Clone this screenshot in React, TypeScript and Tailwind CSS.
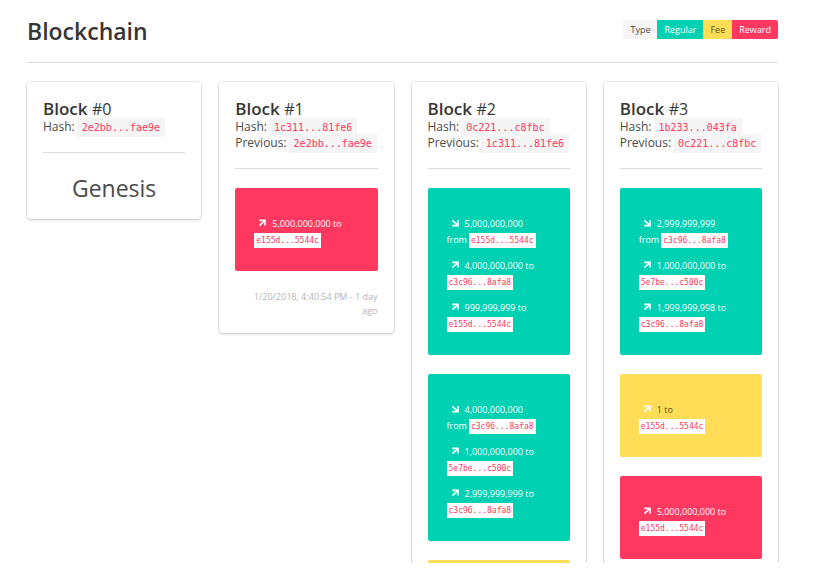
type Kind = "regular" | "fee" | "reward";
type Entry = { dir: "in" | "out"; amount: string; address: string };
type Tx = { kind: Kind; entries: Entry[] };
type Block = { index: number; hash: string; previous?: string; txs: Tx[]; time?: string };

const kindStyle: Record<Kind, string> = {
  regular: "bg-[#00d1b2] text-white",
  fee: "bg-[#ffdd57] text-black/70",
  reward: "bg-[#ff3860] text-white",
};

const blocks: Block[] = [
  { index: 0, hash: "2e2bb...fae9e", txs: [] },
  {
    index: 1,
    hash: "1c311...81fe6",
    previous: "2e2bb...fae9e",
    txs: [{ kind: "reward", entries: [{ dir: "out", amount: "5,000,000,000", address: "e155d...5544c" }] }],
    time: "1/20/2018, 4:40:54 PM - 1 day ago",
  },
  {
    index: 2,
    hash: "0c221...c8fbc",
    previous: "1c311...81fe6",
    txs: [
      {
        kind: "regular",
        entries: [
          { dir: "in", amount: "5,000,000,000", address: "e155d...5544c" },
          { dir: "out", amount: "4,000,000,000", address: "c3c96...8afa8" },
          { dir: "out", amount: "999,999,999", address: "e155d...5544c" },
        ],
      },
      {
        kind: "regular",
        entries: [
          { dir: "in", amount: "4,000,000,000", address: "c3c96...8afa8" },
          { dir: "out", amount: "1,000,000,000", address: "5e7be...c500c" },
          { dir: "out", amount: "2,999,999,999", address: "c3c96...8afa8" },
        ],
      },
      { kind: "fee", entries: [] },
    ],
  },
  {
    index: 3,
    hash: "1b233...043fa",
    previous: "0c221...c8fbc",
    txs: [
      {
        kind: "regular",
        entries: [
          { dir: "in", amount: "2,999,999,999", address: "c3c96...8afa8" },
          { dir: "out", amount: "1,000,000,000", address: "5e7be...c500c" },
          { dir: "out", amount: "1,999,999,998", address: "c3c96...8afa8" },
        ],
      },
      { kind: "fee", entries: [{ dir: "out", amount: "1", address: "e155d...5544c" }] },
      { kind: "reward", entries: [{ dir: "out", amount: "5,000,000,000", address: "e155d...5544c" }] },
    ],
  },
];

function Arrow({ dir }: { dir: "in" | "out" }) {
  return (
    <svg viewBox="0 0 8 8" className="mr-1.5 mb-px ml-1 size-2 shrink-0 text-white" fill="currentColor" aria-hidden="true">
      {dir === "out" ? (
        <path d="M1.4 .6H7.8V6.4H6.2V3.3L2 7.2L.9 6.1L5 2.2H1.4Z" />
      ) : (
        <path d="M7.8 1V7.4H1.4V5.8H5L.9 1.9L2 .8L6.2 4.7V1Z" />
      )}
    </svg>
  );
}

function Hash({ label, value }: { label: string; value: string }) {
  return (
    <p className="flex h-4 items-center gap-0.5 text-xs whitespace-nowrap">
      <span>{label}:</span>
      <code className="bg-[#f5f5f5] px-[5px] font-['DejaVu_Sans_Mono','Liberation_Mono',monospace] text-[10px] leading-[19px] text-[#ff3860]">
        {value}
      </code>
    </p>
  );
}

function EntryRow({ dir, amount, address }: Entry) {
  return (
    <li>
      <div className="flex h-[17px] items-center">
        <Arrow dir={dir} />
        <span>{dir === "out" ? `${amount} to` : amount}</span>
      </div>
      <div className="flex h-4 items-center gap-0.5">
        {dir === "in" && <span>from</span>}
        <code className="bg-white px-0.5 font-['DejaVu_Sans_Mono','Liberation_Mono',monospace] text-[8px] leading-[15px] text-[#ff3860]">
          {address}
        </code>
      </div>
    </li>
  );
}

function Transaction({ kind, entries }: Tx) {
  return (
    <ul className={`mb-[19px] flex flex-col gap-[9px] rounded-xs px-[19px] pt-[27px] pb-[23px] text-[9px] ${kindStyle[kind]}`}>
      {entries.map((entry, i) => (
        <EntryRow key={i} {...entry} />
      ))}
    </ul>
  );
}

function BlockCard({ index, hash, previous, txs, time }: Block) {
  return (
    <article className="rounded-sm bg-white px-4 pt-[17px] pb-[15px] shadow-[0_2px_3px_rgba(10,10,10,0.1),0_0_0_1px_rgba(10,10,10,0.1)]">
      <h2 className="text-[17px] leading-5 font-semibold text-[#363636]">
        Block <span className="text-base leading-5 font-medium">#{index}</span>
      </h2>
      <Hash label="Hash" value={hash} />
      {previous && <Hash label="Previous" value={previous} />}
      <hr className="mt-[17px] mb-[19px] border-[#dbdbdb]" />
      {txs.map((tx, i) => (
        <Transaction key={i} {...tx} />
      ))}
      {index === 0 && <p className="text-center text-[23px] leading-8">Genesis</p>}
      {time && <p className="pl-4 text-right text-[9px] leading-[14px] text-[#b5b5b5]">{time}</p>}
    </article>
  );
}

export default function App() {
  return (
    <div className="h-screen bg-white pb-3.5 font-['Open_Sans','Noto_Sans',sans-serif] text-[#4a4a4a]">
      <main className="h-full overflow-hidden pr-[42px] pl-[27px]">
        <header className="flex items-start justify-between border-b border-[#dbdbdb] pt-[15px] pb-[15px]">
          <h1 className="text-[23px] leading-8 font-semibold text-[#363636]">Blockchain</h1>
          <div className="mt-[5px] flex overflow-hidden rounded-xs text-[9px] leading-[19px]">
            <span className="bg-[#f5f5f5] px-[7px]">Type</span>
            <span className="bg-[#00d1b2] px-[7px] text-white">Regular</span>
            <span className="bg-[#ffdd57] px-[7px] text-black/70">Fee</span>
            <span className="bg-[#ff3860] px-[7px] text-white">Reward</span>
          </div>
        </header>
        <section className="mt-[19px] grid grid-cols-4 items-start gap-[18px]">
          {blocks.map((block) => (
            <BlockCard key={block.index} {...block} />
          ))}
        </section>
      </main>
    </div>
  );
}
